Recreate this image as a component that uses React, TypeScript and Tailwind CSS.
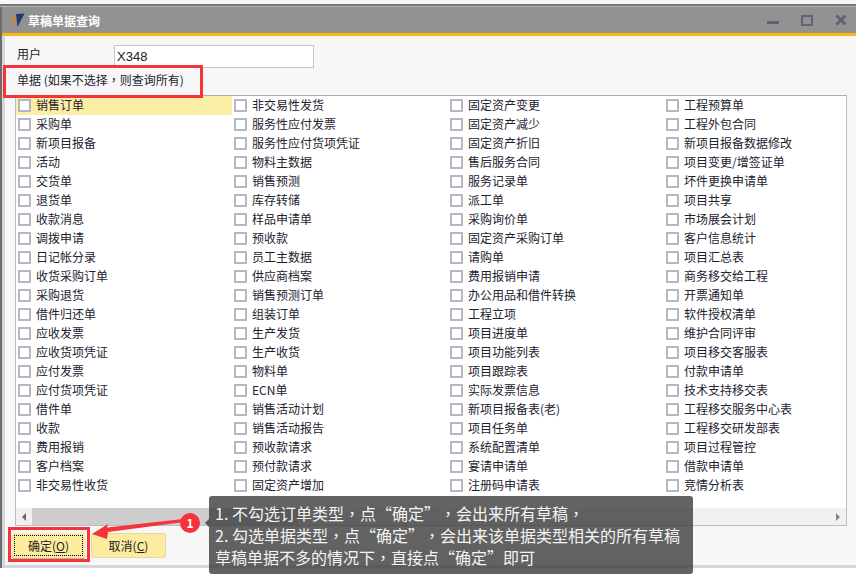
import React from "react";

const columns: string[][] = [
  ["销售订单","采购单","新项目报备","活动","交货单","退货单","收款消息","调拨申请","日记帐分录","收货采购订单","采购退货","借件归还单","应收发票","应收货项凭证","应付发票","应付货项凭证","借件单","收款","费用报销","客户档案","非交易性收货"],
  ["非交易性发货","服务性应付发票","服务性应付货项凭证","物料主数据","销售预测","库存转储","样品申请单","预收款","员工主数据","供应商档案","销售预测订单","组装订单","生产发货","生产收货","物料单","ECN单","销售活动计划","销售活动报告","预收款请求","预付款请求","固定资产增加"],
  ["固定资产变更","固定资产减少","固定资产折旧","售后服务合同","服务记录单","派工单","采购询价单","固定资产采购订单","请购单","费用报销申请","办公用品和借件转换","工程立项","项目进度单","项目功能列表","项目跟踪表","实际发票信息","新项目报备表(老)","项目任务单","系统配置清单","宴请申请单","注册码申请表"],
  ["工程预算单","工程外包合同","新项目报备数据修改","项目变更/增签证单","坏件更换申请单","项目共享","市场展会计划","客户信息统计","项目汇总表","商务移交给工程","开票通知单","软件授权清单","维护合同评审","项目移交客服表","付款申请单","技术支持移交表","工程移交服务中心表","工程移交研发部表","项目过程管控","借款申请单","竞情分析表"],
];

function Row({ label, active }: { label: string; active?: boolean }) {
  return (
    <div className={`flex h-[19px] items-center pl-[2px] ${active ? "bg-[#fdeea6]" : ""}`}>
      <span className="h-[13px] w-[13px] shrink-0 border-2 border-[#b4b7c3] bg-white" />
      <span className="mb-[1px] ml-[5px] whitespace-nowrap text-[12px] text-[#1c2230]">{label}</span>
    </div>
  );
}

const Comma = () => <span className="font-['Noto_Sans_CJK_TC']">，</span>;
const Open = () => <span className="inline-block w-[1em] text-right">“</span>;
const Close = () => <span className="inline-block w-[1em] text-left">”</span>;

export default function App() {
  return (
    <div
      className="relative h-[575px] w-[856px] overflow-hidden bg-white"
      style={{ fontFamily: '"Noto Sans CJK SC","Liberation Sans",sans-serif' }}
    >
      <div className="h-[4px] bg-[#f7f7f7]" />
      <div className="h-[2px] bg-[#777]" />
      <div className="h-[1px] bg-[#b5b5b5]" />
      <div className="flex h-[561px] flex-col border-l-[2px] border-[#6d6d6d]">
        <div className="flex h-[26px] shrink-0 items-center bg-[#929292] pl-[7px] pr-[9px]">
          <svg width="16" height="16" viewBox="0 0 16 16">
            <path d="M7 2 L15.5 1.5 L8.5 15 Z" fill="#1f3a70" />
            <path d="M1 6 L7 6.5 L5.5 13 Z" fill="#d9822b" />
          </svg>
          <span className="ml-[3px] mt-[2px] text-[12px] font-bold text-white">草稿单据查询</span>
          <div className="ml-auto flex items-center gap-[22px]">
            <span className="mt-[5px] h-[3px] w-[12px] bg-[#5f6375]" />
            <span className="h-[11px] w-[12px] border-2 border-[#5f6375]" />
            <svg width="12" height="12" viewBox="0 0 12 12"><path d="M1.5 1.5 L10.5 10.5 M10.5 1.5 L1.5 10.5" stroke="#5f6375" strokeWidth="3" /></svg>
          </div>
        </div>
        <div className="h-[3px] shrink-0 bg-[#fbb80f]" />
        <div className="flex h-[532px] shrink-0 flex-col border-b-[3px] border-l-[3px] border-[#d6d7dd] bg-[#f7f7f7]">
          <div className="relative flex h-[26px] shrink-0 items-center pl-[12px] pt-[10px]">
            <span className="text-[12px] text-[#1c2230]">用户</span>
            <div className="absolute left-[109px] top-[9px] flex h-[23px] w-[200px] items-center border border-[#c4c6cc] bg-white pl-[2px] text-[13px] text-[#222]">
              <span className="font-['Liberation_Sans']">X348</span>
            </div>
          </div>
          <div className="flex h-[33px] shrink-0 items-center pl-[12px] pt-[3px] text-[12px] text-[#1c2230]">单据 (如果不选择<Comma />则查询所有)</div>
          <div className="ml-[10px] flex h-[431px] w-[832px] shrink-0 flex-col border border-[#bcbdc8] border-t-[#a9abb8] bg-white">
            <div className="grid flex-1 grid-cols-[216px_216px_216px_1fr] overflow-hidden">
              {columns.map((col, i) => (
                <div key={i}>
                  {col.map((label, j) => (
                    <Row key={j} label={label} active={i === 0 && j === 0} />
                  ))}
                </div>
              ))}
            </div>
            <div className="flex h-[17px] shrink-0 items-center bg-[#f1f1f1]">
              <div className="flex h-full w-[16px] items-center justify-center">
                <span className="h-0 w-0 border-y-[4px] border-r-[4px] border-y-transparent border-r-[#666]" />
              </div>
              <div className="h-full w-[266px] bg-[#cdcdcd]" />
              <div className="ml-auto flex h-full w-[16px] items-center justify-center">
                <span className="h-0 w-0 border-y-[4px] border-l-[4px] border-y-transparent border-l-[#888]" />
              </div>
            </div>
          </div>
          <div className="mt-[7px] flex gap-[6px] pl-[7px]">
            <button className="flex h-[25px] w-[73px] items-center justify-center rounded-[2px] bg-[#fdeba0] p-[2px] shadow-[0_1px_1px_#aaa]">
              <span className="flex h-full w-full items-center justify-center border border-dotted border-black text-[12px] text-[#222]">确定(<u>O</u>)</span>
            </button>
            <button className="flex h-[25px] w-[75px] items-center justify-center rounded-[2px] border border-[#e6d9a0] bg-[#fdeba0] text-[12px] text-[#222]">取消(<u>C</u>)</button>
          </div>
        </div>
      </div>

      <div className="absolute left-[3px] top-[65px] h-[33px] w-[200px] border-[3px] border-[#f5333a]" />
      <div className="absolute left-[8px] top-[527px] h-[35px] w-[82px] border-[3px] border-[#f5333a]" />

      <svg className="absolute left-[88px] top-[510px]" width="112" height="36" viewBox="0 0 112 36">
        <path d="M4 24 L20 14 L19 17.5 L95 9 L96 12 L20 22 L19 29 Z" fill="#f5333a" />
      </svg>
      <div className="absolute left-[180px] top-[513px] flex h-[20px] w-[20px] items-center justify-center rounded-full bg-[#f5333a] text-[12px] font-bold text-white">1</div>

      <div className="absolute left-[205px] top-[519px] h-0 w-0 border-y-[4px] border-r-[4px] border-y-transparent border-r-[#555]" />
      <div className="absolute left-[209px] top-[496px] h-[78px] w-[484px] rounded-[3px] bg-[#3c3c3c]/80 pl-[6px] pt-[6px] text-[16px] leading-[22px] whitespace-nowrap text-[#f4f4f4]">
        <div>1. 不勾选订单类型<Comma />点<Open />确定<Close /><Comma />会出来所有草稿<Comma /></div>
        <div>2. 勾选单据类型<Comma />点<Open />确定<Close /><Comma />会出来该单据类型相关的所有草稿</div>
        <div>草稿单据不多的情况下<Comma />直接点<Open />确定<Close />即可</div>
      </div>
    </div>
  );
}
